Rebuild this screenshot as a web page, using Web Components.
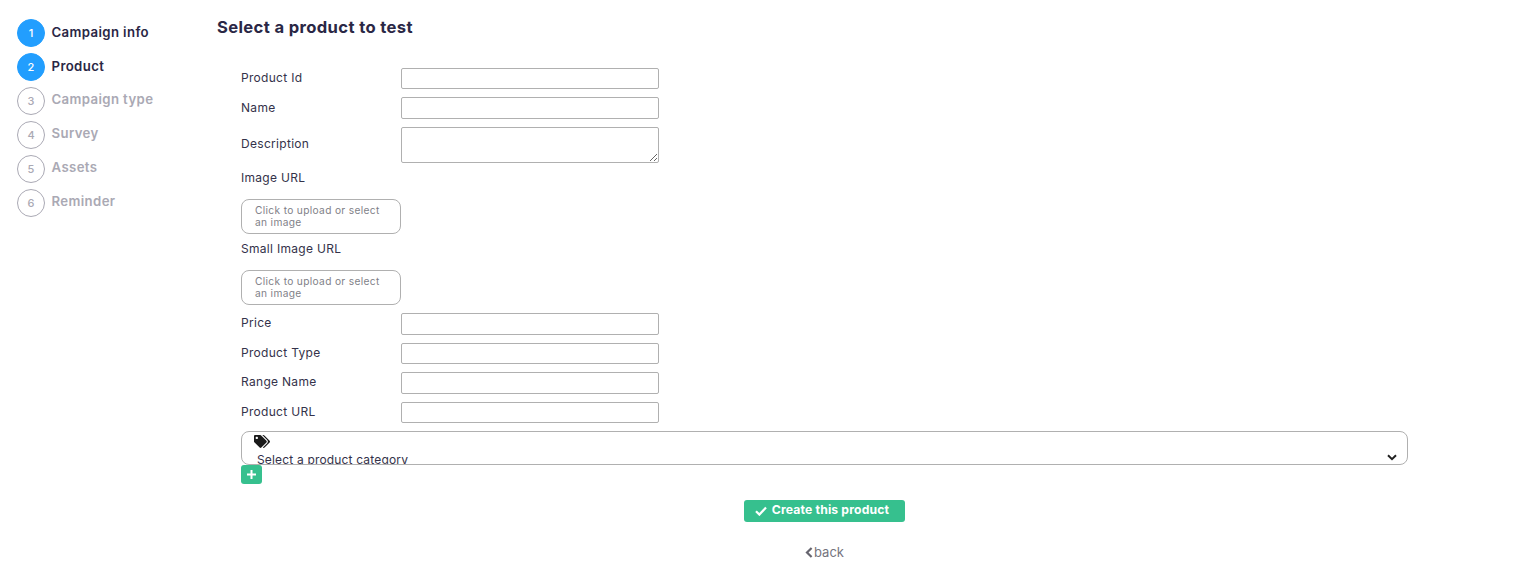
<!DOCTYPE html>
<html>
<head>
<meta charset="utf-8">
<title>Select a product to test</title>
<style>
  html, body { margin: 0; padding: 0; background: #fff; overflow: hidden; }
  body { font-family: Inter, "Open Sans", sans-serif; color: #2f2c4a; }
</style>
</head>
<body>
<campaign-page>
  <step-list slot="side">
    <step-item num="1" done>Campaign info</step-item>
    <step-item num="2" done>Product</step-item>
    <step-item num="3">Campaign type</step-item>
    <step-item num="4">Survey</step-item>
    <step-item num="5">Assets</step-item>
    <step-item num="6">Reminder</step-item>
  </step-list>
  <product-form>
    <form-field label="Product Id"></form-field>
    <form-field label="Name"></form-field>
    <form-field label="Description" multiline></form-field>
    <upload-field label="Image URL"></upload-field>
    <upload-field label="Small Image URL"></upload-field>
    <form-field label="Price"></form-field>
    <form-field label="Product Type"></form-field>
    <form-field label="Range Name"></form-field>
    <form-field label="Product URL"></form-field>
    <category-select></category-select>
  </product-form>
</campaign-page>

<script>
class CampaignPage extends HTMLElement {
  constructor() {
    super();
    const shadow = this.attachShadow({ mode: "open" });
    shadow.innerHTML = `
      <style>
        :host { display: grid; grid-template-columns: 217px 1fr; width: 1533px; height: 581px; }
        .side { padding: 19px 0 0 17px; }
      </style>
      <div class="side"><slot name="side"></slot></div>
      <div><slot></slot></div>`;
  }
}

class StepList extends HTMLElement {
  constructor() {
    super();
    const shadow = this.attachShadow({ mode: "open" });
    shadow.innerHTML = `
      <style>
        :host { display: flex; flex-direction: column; gap: 6px; }
      </style>
      <slot></slot>`;
  }
}

class StepItem extends HTMLElement {
  constructor() {
    super();
    const shadow = this.attachShadow({ mode: "open" });
    shadow.innerHTML = `
      <style>
        :host { display: flex; align-items: center; gap: 6.5px; height: 28px; font-size: 13.2px; font-weight: 600; letter-spacing: .38px; color: #aaa9b4; white-space: nowrap; }
        :host([done]) { color: #2a2745; }
        .num { box-sizing: border-box; width: 28px; height: 28px; border-radius: 50%; border: 1px solid #aaa9b4; display: flex; align-items: center; justify-content: center; font-size: 11px; font-weight: 500; letter-spacing: 0; position: relative; }
        :host([done]) .num { background: #229efe; border-color: #229efe; color: #fff; }
        .txt { position: relative; top: -2px; }
        :host([done]) .txt { top: -1px; }
      </style>
      <span class="num"></span><span class="txt"><slot></slot></span>`;
    shadow.querySelector(".num").textContent = this.getAttribute("num");
  }
}

class ProductForm extends HTMLElement {
  constructor() {
    super();
    const shadow = this.attachShadow({ mode: "open" });
    shadow.innerHTML = `
      <style>
        :host { display: block; color: #34324a; }
        h2 { margin: 0; padding-top: 16px; height: 67.9px; box-sizing: border-box; font-size: 16.6px; line-height: 22px; font-weight: 700; letter-spacing: .36px; color: #2a2745; }
        .fields { display: flex; flex-direction: column; width: 1167px; margin-left: 24px; }
        .create { align-self: center; display: flex; align-items: center; justify-content: center; gap: 5px; box-sizing: border-box; width: 161px; height: 22px; margin: 16px 0 0 0; padding: 0 5px 3px 0; background: #36c08e; border: 0; border-radius: 3px; color: #fff; font: 700 12.2px Inter, sans-serif; letter-spacing: .15px; }
        .create svg { position: relative; top: 1px; }
        .back { align-self: center; display: flex; align-items: center; gap: 1px; margin-top: 21px; font-size: 13px; line-height: 18px; color: #75747e; }
        svg { display: block; }
      </style>
      <h2>Select a product to test</h2>
      <div class="fields">
        <slot></slot>
        <button class="create">
          <svg width="12" height="10" viewBox="0 0 12 10"><path d="M1 5.2l3.4 3.4L11 1.6" fill="none" stroke="#fff" stroke-width="2.2"/></svg>
          Create this product
        </button>
        <div class="back">
          <svg width="8" height="11" viewBox="0 0 8 11"><path d="M6.6 1L2 5.5l4.6 4.5" fill="none" stroke="#66656f" stroke-width="2.2"/></svg>
          back
        </div>
      </div>`;
  }
}

class FormField extends HTMLElement {
  constructor() {
    super();
    const shadow = this.attachShadow({ mode: "open" });
    const control = this.hasAttribute("multiline") ? "<textarea></textarea>" : '<input type="text">';
    shadow.innerHTML = `
      <style>
        :host { display: flex; align-items: center; font-size: 12px; letter-spacing: .3px; margin-bottom: 8px; }
        label { width: 160px; flex: none; position: relative; top: -1px; }
        input, textarea { box-sizing: border-box; display: block; width: 258px; height: 21.5px; margin: 0; padding: 0 4px; border: 1px solid #b0b0b0; border-radius: 2px; background: #fff; outline: 0; }
        textarea { height: 36.15px; }
      </style>
      <label></label>${control}`;
    shadow.querySelector("label").textContent = this.getAttribute("label");
  }
}

class UploadField extends HTMLElement {
  constructor() {
    super();
    const shadow = this.attachShadow({ mode: "open" });
    shadow.innerHTML = `
      <style>
        :host { display: block; font-size: 12px; letter-spacing: .3px; margin: -2px 0 8px; }
        .lbl { line-height: 18px; margin-bottom: 12px; }
        .box { box-sizing: border-box; width: 160px; height: 35px; padding: 4px 13px; border: 1px solid #b0b0b0; border-radius: 8px; font-size: 10.2px; letter-spacing: .33px; line-height: 12px; color: #7f7f88; }
      </style>
      <div class="lbl"></div>
      <div class="box">Click to upload or select an image</div>`;
    shadow.querySelector(".lbl").textContent = this.getAttribute("label");
  }
}

class CategorySelect extends HTMLElement {
  constructor() {
    super();
    const shadow = this.attachShadow({ mode: "open" });
    shadow.innerHTML = `
      <style>
        :host { display: block; font-size: 12px; letter-spacing: .17px; }
        .box { position: relative; box-sizing: border-box; height: 34px; border: 1px solid #b0b0b0; border-radius: 8px; padding: 3px 0 0 12px; overflow: hidden; }
        .tags { display: block; }
        .val { margin: 3px 0 0 3px; line-height: 18px; color: #34324a; }
        .arrow { position: absolute; right: 10px; bottom: 3px; }
        .add { display: flex; align-items: center; justify-content: center; width: 21px; height: 19px; background: #36c08e; border-radius: 3px; }
      </style>
      <div class="box">
        <svg class="tags" width="16" height="13" viewBox="0 0 640 512"><path fill="#1a1a1a" d="M497.941 225.941L286.059 14.059A48 48 0 0 0 252.118 0H48C21.49 0 0 21.49 0 48v204.118a48 48 0 0 0 14.059 33.941l211.882 211.882c18.744 18.745 49.136 18.746 67.882 0l204.118-204.118c18.745-18.745 18.745-49.137 0-67.882zM112 160c-26.51 0-48-21.49-48-48s21.49-48 48-48 48 21.49 48 48-21.49 48-48 48zm513.941 133.823L421.823 497.941c-18.745 18.745-49.137 18.745-67.882 0l-.36-.36L527.64 323.522c16.999-16.999 26.36-39.6 26.36-63.64s-9.362-46.641-26.36-63.64L331.397 0h48.721a48 48 0 0 1 33.941 14.059l211.882 211.882c18.745 18.745 18.745 49.137 0 67.882z"/></svg>
        <div class="val">Select a product category</div>
        <svg class="arrow" width="10" height="7" viewBox="0 0 10 7"><path d="M1 1.2l4 4 4-4" fill="none" stroke="#222" stroke-width="2"/></svg>
      </div>
      <div class="add">
        <svg width="11" height="11" viewBox="0 0 11 11"><path d="M5.5 1v9M1 5.5h9" stroke="#fff" stroke-width="2"/></svg>
      </div>`;
  }
}

customElements.define("campaign-page", CampaignPage);
customElements.define("step-list", StepList);
customElements.define("step-item", StepItem);
customElements.define("product-form", ProductForm);
customElements.define("form-field", FormField);
customElements.define("upload-field", UploadField);
customElements.define("category-select", CategorySelect);
</script>
</body>
</html>
